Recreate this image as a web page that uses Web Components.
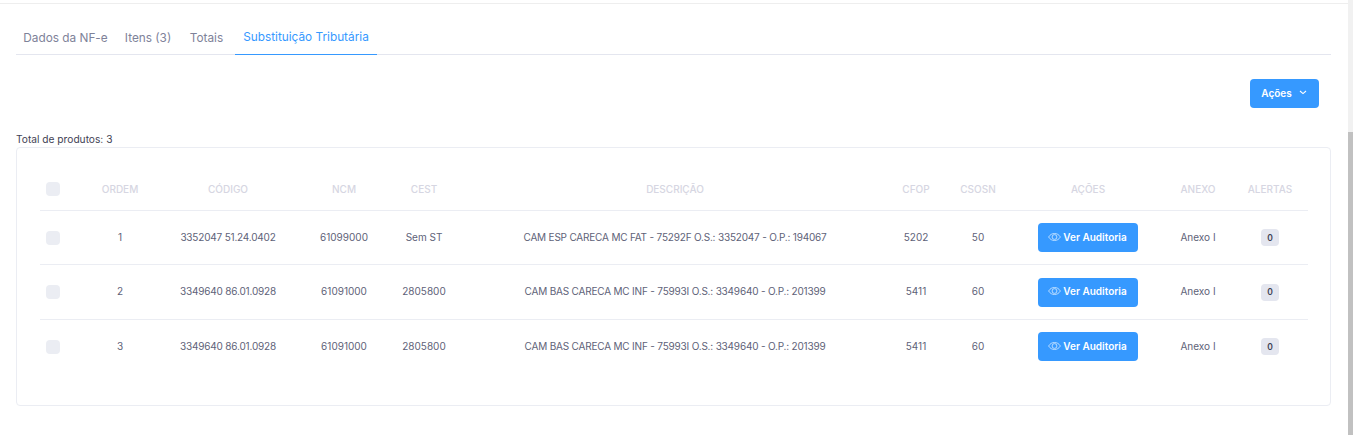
<!DOCTYPE html>
<html lang="pt-BR">
<head>
<meta charset="utf-8">
<title>Substituição Tributária</title>
<style>
html, body { margin: 0; height: 435px; overflow: hidden; background: #fff; }
body { font-family: Inter, "Liberation Sans", sans-serif; color: #5e6278; }
</style>
</head>
<body>
<nf-page>
	<nf-tabs>
		<nf-tab style="--w: 83px; --m: 2px">Dados da NF-e</nf-tab>
		<nf-tab style="--w: 46px; --m: 3px">Itens (3)</nf-tab>
		<nf-tab style="--w: 33px; --m: 4px">Totais</nf-tab>
		<nf-tab active style="--w: 126px">Substituição Tributária</nf-tab>
	</nf-tabs>
	<nf-toolbar><nf-button menu>Ações</nf-button></nf-toolbar>
	<nf-total>Total de produtos: 3</nf-total>
	<nf-card>
		<nf-row head>
			<nf-check></nf-check><span>ORDEM</span><span>CÓDIGO</span><span>NCM</span><span>CEST</span>
			<span>DESCRIÇÃO</span><span>CFOP</span><span>CSOSN</span><span>AÇÕES</span><span>ANEXO</span><span>ALERTAS</span>
		</nf-row>
		<nf-row>
			<nf-check></nf-check><span>1</span><span class="tight">3352047 51.24.0402</span><span>61099000</span><span>Sem ST</span>
			<span class="tight">CAM ESP CARECA MC FAT - 75292F O.S.: 3352047 - O.P.: 194067</span><span>5202</span><span>50</span>
			<nf-button eye>Ver Auditoria</nf-button><span>Anexo I</span><nf-badge>0</nf-badge>
		</nf-row>
		<nf-row>
			<nf-check></nf-check><span>2</span><span class="tight">3349640 86.01.0928</span><span>61091000</span><span>2805800</span>
			<span class="tight">CAM BAS CARECA MC INF - 75993I O.S.: 3349640 - O.P.: 201399</span><span>5411</span><span>60</span>
			<nf-button eye>Ver Auditoria</nf-button><span>Anexo I</span><nf-badge>0</nf-badge>
		</nf-row>
		<nf-row last>
			<nf-check></nf-check><span>3</span><span class="tight">3349640 86.01.0928</span><span>61091000</span><span>2805800</span>
			<span class="tight">CAM BAS CARECA MC INF - 75993I O.S.: 3349640 - O.P.: 201399</span><span>5411</span><span>60</span>
			<nf-button eye>Ver Auditoria</nf-button><span>Anexo I</span><nf-badge>0</nf-badge>
		</nf-row>
	</nf-card>
</nf-page>

<script>
function define(name, css, html) {
	customElements.define(name, class extends HTMLElement {
		constructor() {
			super();
			this.attachShadow({ mode: 'open' });
			this.shadowRoot.innerHTML = `<style>${css}</style>${html || '<slot></slot>'}`;
		}
	});
}

define('nf-page', `
	:host { display: flex; height: 435px; }
	.main { flex: 1; min-width: 0; margin-top: 3px; border-top: 1px solid #eeeeee; padding: 16px 17px 0 16px; }
	.track { width: 5px; background: #f1f1f1; }
	.thumb { margin-top: 132px; height: 303px; background: #c1c1c1; }
`, `<div class="main"><slot></slot></div><div class="track"><div class="thumb"></div></div>`);

define('nf-tabs', `
	:host { display: flex; height: 35px; box-sizing: border-box; border-bottom: 1px solid #e4e6ef; }
`);

define('nf-tab', `
	:host { display: flex; align-items: center; justify-content: center; box-sizing: border-box; height: 35px;
		width: calc(var(--w) + 16px); margin-right: var(--m, 0); white-space: nowrap;
		font-size: 11.8px; color: #7e8299; }
	:host([active]) { color: #3699ff; border-bottom: 1px solid #3699ff; }
`);

define('nf-toolbar', `
	:host { display: flex; justify-content: flex-end; padding: 24px 12px 0 0; }
`);

define('nf-total', `
	:host { display: block; margin-top: 25px; height: 14px; line-height: 13px; font-size: 10.2px; color: #3f4254; }
`);

define('nf-card', `
	:host { display: block; box-sizing: border-box; height: 259px; border: 1px solid #ebedf3; border-radius: 4px; padding: 19px 22px 0 23px; }
`);

define('nf-row', `
	:host { display: grid; align-items: center; justify-items: center; box-sizing: border-box; height: 54.4px;
		grid-template-columns: 40px 80px 136px 96px 64px 438px 44px 80px 140px 80px 64px;
		border-bottom: 1px solid #ebedf3; white-space: nowrap; font-size: 10px; color: #5e6278; }
	::slotted(span) { margin-bottom: 2px; }
	::slotted(span.tight) { letter-spacing: -0.19px; }
	:host([head]) { height: 44px; font-weight: 500; color: #d6d6e2; }
	:host([head]) ::slotted(span) { margin-bottom: 0; }
	:host([last]) { border-bottom: 0; }
	::slotted(nf-check) { justify-self: start; margin-left: 6px; }
`);

define('nf-check', `
	:host { display: block; width: 14px; height: 14px; border-radius: 4px; background: #ebedf3; }
`);

define('nf-badge', `
	:host { display: flex; align-items: center; justify-content: center; width: 18px; height: 17px; border-radius: 4px;
		background: #e4e6ef; font-size: 8.5px; font-weight: 600; color: #3f4254; }
`);

customElements.define('nf-button', class extends HTMLElement {
	constructor() {
		super();
		this.attachShadow({ mode: 'open' });
		const eye = this.hasAttribute('eye') ? `<svg width="13" height="12" viewBox="0 0 13 12" fill="none" stroke="#d7ebff" stroke-width=".8"><path d="M.6 6C2.1 3.6 4.1 2.5 6.5 2.5S10.900 3.600 12.400 6C10.900 8.400 8.900 9.500 6.500 9.500S2.100 8.400.6 6Z"/><circle cx="6.500" cy="6" r="2.400"/></svg>` : '';
		const chevron = this.hasAttribute('menu') ? `<svg width="8" height="5" viewBox="0 0 8 5" fill="none" stroke="#fff" stroke-width="1.1"><path d="M1 1l3 2.6L7 1"/></svg>` : '';
		this.shadowRoot.innerHTML = `<style>
			:host { display: flex; align-items: center; justify-content: center; box-sizing: border-box; height: 29px; border-radius: 4px;
				background: #3699ff; color: #fff; font-size: 10px; font-weight: 600; white-space: nowrap; padding-bottom: 2px; }
			:host([eye]) { width: 100px; gap: 2px; padding-right: 1px; }
			:host([menu]) { width: 69px; gap: 7px; font-size: 10px; padding-right: 1px; }
		</style>${eye}<slot></slot>${chevron}`;
	}
});
</script>
</body>
</html>
